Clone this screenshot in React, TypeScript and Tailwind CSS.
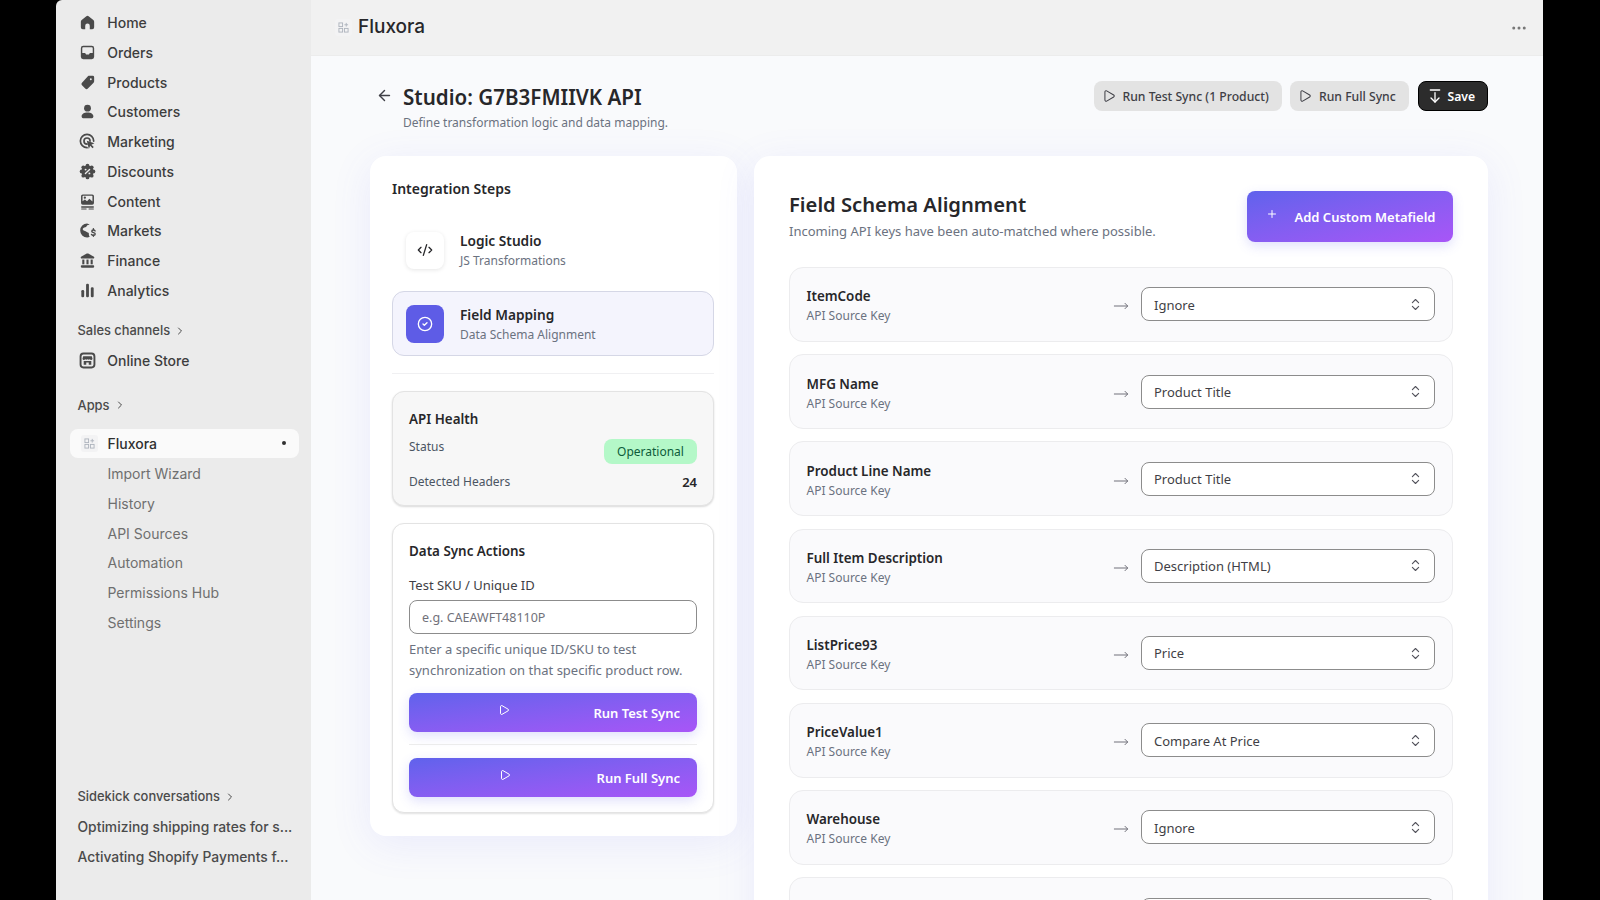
import React from 'react';
import { ArrowDownFromLine, ArrowLeft, ChevronRight, ChevronsUpDown, CircleCheck, CodeXml, Ellipsis, MoveRight, Play, Plus } from 'lucide-react';

const icons: Record<string, React.ReactNode> = {
  home: <path d="M8.8 3.4 3.9 7.3A2.4 2.4 0 0 0 3 9.2V15a2 2 0 0 0 2 2h2.6v-3.6a2.4 2.4 0 0 1 4.8 0V17H15a2 2 0 0 0 2-2V9.2a2.4 2.4 0 0 0-.9-1.9l-4.9-3.900a2 2 0 0 0-2.400 0z" />,
  orders: <path fillRule="evenodd" d="M5.500 3h9A2.500 2.500 0 0 1 17 5.500v9a2.500 2.500 0 0 1-2.500 2.500h-9A2.500 2.500 0 0 1 3 14.500v-9A2.500 2.500 0 0 1 5.500 3zm-1 2.500v5h3l1 1.600h3l1-1.600h3v-5a1 1 0 0 0-1-1h-9a1 1 0 0 0-1 1z" />,
  products: <path fillRule="evenodd" d="M11.200 3h4.300A1.500 1.500 0 0 1 17 4.500v4.300a2 2 0 0 1-.6 1.400l-6 6.200a2 2 0 0 1-2.800 0l-3.400-3.400a2 2 0 0 1 0-2.800l6-6.600a2 2 0 0 1 1-.6zm2.300 2.500a1 1 0 1 0 0 2 1 1 0 0 0 0-2z" />,
  customers: <><circle cx="10" cy="6.500" r="3.600" /><path d="M3.800 15.300c0-2.600 2.600-4.200 6.200-4.200s6.200 1.600 6.200 4.200c0 .9-.7 1.700-1.600 1.700H5.400c-.9 0-1.600-.8-1.600-1.700z" /></>,
  marketing: <><path fill="none" stroke="currentColor" strokeWidth="1.800" strokeLinecap="round" d="M9.500 16.500A7 7 0 1 1 16.500 9.500" /><path fill="none" stroke="currentColor" strokeWidth="1.800" strokeLinecap="round" d="M9.500 12.700A3.200 3.200 0 1 1 12.700 9.500" /><path d="m9.300 9.300 8 2.600-3.200 1.400 2.500 2.500-1.300 1.300-2.500-2.500-1.400 3.200z" /></>,
  discounts: <><circle cx="10" cy="10" r="6.300" /><circle cx="10" cy="3.800" r="2" /><circle cx="10" cy="16.200" r="2" /><circle cx="3.800" cy="10" r="2" /><circle cx="16.200" cy="10" r="2" /><circle cx="5.600" cy="5.600" r="2" /><circle cx="14.400" cy="5.600" r="2" /><circle cx="5.600" cy="14.400" r="2" /><circle cx="14.400" cy="14.400" r="2" /><path stroke="#ebebeb" strokeWidth="1.400" strokeLinecap="round" d="m7.800 12.200 4.400-4.400" /><circle cx="8" cy="8" r="1" fill="#ebebeb" /><circle cx="12" cy="12" r="1" fill="#ebebeb" /></>,
  content: <><path fillRule="evenodd" d="M5 2.500h10A1.800 1.800 0 0 1 16.800 4.300v7.400A1.800 1.800 0 0 1 15 13.500H5a1.800 1.800 0 0 1-1.800-1.800V4.300A1.800 1.800 0 0 1 5 2.500zm-.2 2v5.300l2.400-2 2.300 2 2.500-2.800 3.200 3V4.500a.6.600 0 0 0-.6-.6H5.400a.6.600 0 0 0-.6.600z" /><circle cx="7.200" cy="6" r="1.200" /><rect x="3.200" y="15" width="13.600" height="1.500" rx=".7" /><rect x="3.200" y="17.300" width="6" height="1.100" rx=".5" /><rect x="11" y="17.300" width="5.800" height="1.100" rx=".5" /></>,
  markets: <><path d="M9.600 2.700a7.300 7.300 0 0 0 0 14.600c1 0 2-.2 2.800-.6-1-1-1-2.800-1-3.700 0-1-2-1.200-3-2s-2.900-.6-3.400-2c-.4-1.200 1.300-2 2.800-2.400C9.400 6.200 9 5 9.800 4.600c1-.5 2.500-.4 3 .1a7.200 7.200 0 0 0-3.200-2z" /><path fill="none" stroke="currentColor" strokeWidth="1.500" strokeLinecap="round" d="M18 10.500c-.4-.8-1-1.100-1.800-1.100-1 0-1.700.6-1.700 1.400 0 1.900 3.600 1 3.600 2.900 0 .9-.8 1.500-1.900 1.500-.9 0-1.600-.4-2-1.100M16.200 8.200v1.200M16.200 14.700v1.300" /></>,
  finance: <><path d="M9.300 2.700 3.600 5.700A1.200 1.200 0 0 0 4.200 8h11.600a1.200 1.200 0 0 0 .6-2.300l-5.700-3a1.500 1.500 0 0 0-1.400 0z" /><rect x="4.500" y="9" width="2.200" height="5" /><rect x="8.900" y="9" width="2.200" height="5" /><rect x="13.300" y="9" width="2.200" height="5" /><rect x="3" y="15" width="14" height="2.500" rx=".8" /></>,
  analytics: <><rect x="3.500" y="9.500" width="3" height="7.500" rx="1.300" /><rect x="8.500" y="3" width="3" height="14" rx="1.300" /><rect x="13.500" y="6.500" width="3" height="10.500" rx="1.300" /></>,
  store: <><rect x="2.700" y="2.700" width="14.600" height="14.600" rx="3" fill="none" stroke="currentColor" strokeWidth="2" /><path d="M5.500 5.500h9l.8 2.700a1.500 1.500 0 0 1-2.800.6 2 2 0 0 1-2.500 0 2 2 0 0 1-2.500 0 1.500 1.500 0 0 1-2.800-.6z" /><path fillRule="evenodd" d="M6 10.500h8v4h-2.700v-2.500H8.700v2.500H6z" /></>,
};

const topNav = [
  ['home', 'Home'],
  ['orders', 'Orders'],
  ['products', 'Products'],
  ['customers', 'Customers'],
  ['marketing', 'Marketing'],
  ['discounts', 'Discounts'],
  ['content', 'Content'],
  ['markets', 'Markets'],
  ['finance', 'Finance'],
  ['analytics', 'Analytics'],
];

const subNav = ['Import Wizard', 'History', 'API Sources', 'Automation', 'Permissions Hub', 'Settings'];

const mappings = [
  ['ItemCode', 'Ignore'],
  ['MFG Name', 'Product Title'],
  ['Product Line Name', 'Product Title'],
  ['Full Item Description', 'Description (HTML)'],
  ['ListPrice93', 'Price'],
  ['PriceValue1', 'Compare At Price'],
  ['Warehouse', 'Ignore'],
  ['', ''],
];

const NavRow = ({ icon, label, className = '' }: { icon: string; label: string; className?: string }) => (
  <div className={`flex h-[29.75px] items-center gap-[10px] pl-[22.3px] text-[14px] font-medium text-[#3d3d3d] ${className}`}>
    <svg viewBox="0 0 20 20" fill="currentColor" className="h-[19px] w-[19px] shrink-0 text-[#4a4a4a]">
      {icons[icon]}
    </svg>
    {label}
  </div>
);

const AppGlyph = () => (
  <span className="flex h-[17px] w-[17px] shrink-0 items-center justify-center rounded-[3px] bg-[#f3f3f4]">
    <svg viewBox="0 0 12 12" className="h-[11px] w-[11px]" fill="none" stroke="#aeb4bd" strokeWidth="1">
      <rect x="1" y="1" width="4" height="4" />
      <rect x="1" y="7" width="4" height="4" />
      <rect x="7" y="7" width="4" height="4" />
      <path d="M9 1v4M7 3h4" />
    </svg>
  </span>
);

const SectionLabel = ({ label, className }: { label: string; className: string }) => (
  <div className={`flex h-6 items-center gap-[4px] pl-[21.5px] text-[12.9px] font-medium text-[#4a4a4a] ${className}`}>
    {label}
    <ChevronRight className="h-3 w-3" strokeWidth={2} />
  </div>
);

const Sidebar = () => (
  <aside className="flex w-[255px] shrink-0 flex-col rounded-tl-md bg-[#ebebeb] pb-[28px] pt-[7.7px] font-['Inter',sans-serif]">
    {topNav.map(([icon, label]) => (
      <NavRow key={label} icon={icon} label={label} />
    ))}
    <SectionLabel label="Sales channels" className="mt-[13.5px]" />
    <NavRow icon="store" label="Online Store" className="mt-[3.4px]" />
    <SectionLabel label="Apps" className="mt-[17.5px]" />
    <div className="ml-[13.5px] mr-[12.5px] mt-[11.5px] flex h-[29px] items-center rounded-lg bg-[#fafafa] pl-[11.5px] pr-[13px] text-[14px] font-medium text-[#303030]">
      <AppGlyph />
      <span className="ml-[9.5px]">Fluxora</span>
      <span className="ml-auto h-1 w-1 rounded-full bg-[#303030]" />
    </div>
    <div className="mt-[1px]">
      {subNav.map((label) => (
        <div key={label} className="flex h-[29.75px] items-center pl-[51.5px] text-[14px] text-[#6f6f6f]">
          {label}
        </div>
      ))}
    </div>
    <div className="mt-auto">
      <SectionLabel label="Sidekick conversations" className="" />
      <div className="mt-[3.7px] flex h-[29.75px] items-center whitespace-nowrap pl-[21.5px] text-[13.85px] font-medium text-[#4a4a4a]">
        Optimizing shipping rates for s...
      </div>
      <div className="flex h-[29.75px] items-center whitespace-nowrap pl-[21.5px] text-[13.85px] font-medium text-[#4a4a4a]">
        Activating Shopify Payments f...
      </div>
    </div>
  </aside>
);

const GradientButton = ({ label, iconGap, className }: { label: string; iconGap: string; className: string }) => (
  <button className={`flex h-[38.5px] w-full items-center rounded-lg bg-gradient-to-br from-[#5f62ec] to-[#a855f7] pr-[17px] text-[13px] font-semibold text-white shadow-[0_4px_12px_rgba(99,102,241,0.2)] ${className}`}>
    <Play className={`mb-[4px] h-3 w-3 ${iconGap}`} strokeWidth={2} />
    <span className="ml-auto mt-[3px]">{label}</span>
  </button>
);

const StepsCard = () => (
  <div className="w-[367px] shrink-0 self-start rounded-2xl bg-white pb-[23px] pl-[22px] pr-[23px] pt-[23px] shadow-[0_8px_40px_rgba(99,102,241,0.1)]">
    <h2 className="text-[14px] font-semibold leading-5 text-[#27272a]">Integration Steps</h2>
    <div className="mt-[31px] flex items-center gap-[16px] px-[14px]">
      <div className="flex h-[37px] w-[38px] items-center justify-center rounded-lg bg-white shadow-[0_1px_4px_rgba(0,0,0,0.1)]">
        <CodeXml className="h-4 w-4 text-[#27272a]" strokeWidth={2} />
      </div>
      <div className="mt-[1px]">
        <div className="text-[13.7px] font-semibold leading-5 text-[#27272a]">Logic Studio</div>
        <div className="mt-[1px] text-[12px] leading-[18px] text-[#6b7280]">JS Transformations</div>
      </div>
    </div>
    <div className="mt-[21px] flex h-[65px] items-center gap-[16px] rounded-xl border border-[#d5d7e6] bg-[#f4f4fd] px-[13px]">
      <div className="flex h-[38px] w-[38px] items-center justify-center rounded-lg bg-[#5e5ce6]">
        <CircleCheck className="h-4 w-4 text-white" strokeWidth={2} />
      </div>
      <div className="mt-[1px]">
        <div className="text-[13.7px] font-semibold leading-5 text-[#27272a]">Field Mapping</div>
        <div className="mt-[1px] text-[12px] leading-[18px] text-[#6b7280]">Data Schema Alignment</div>
      </div>
    </div>
    <div className="mt-[17px] h-px bg-[#f0f0f2]" />
    <div className="mt-[17px] h-[115px] rounded-xl border border-[#e3e3e3] bg-[#f7f7f7] px-[16px] pt-[17px] shadow-[0_1px_2px_rgba(0,0,0,0.15)]">
      <div className="text-[13.4px] font-semibold leading-5 text-[#27272a]">API Health</div>
      <div className="mt-[10px] flex items-start justify-between">
        <span className="mt-[-1px] text-[12px] leading-[18px] text-[#4b5563]">Status</span>
        <span className="flex h-[25px] w-[93px] items-center justify-center rounded-lg bg-[#b4f8c8] text-[12px] text-[#0d5c3a]">Operational</span>
      </div>
      <div className="mt-[9px] flex items-center justify-between text-[12px] leading-[18px] text-[#4b5563]">
        <span>Detected Headers</span>
        <span className="text-[13px] font-semibold text-[#27272a]">24</span>
      </div>
    </div>
    <div className="mt-[17px] h-[290px] rounded-xl border border-[#e3e3e3] bg-white px-[16px] pt-[17px] shadow-[0_1px_2px_rgba(0,0,0,0.12)]">
      <div className="text-[13.4px] font-semibold leading-5 text-[#27272a]">Data Sync Actions</div>
      <label className="mt-[14px] block text-[13px] leading-5 text-[#3f3f46]">Test SKU / Unique ID</label>
      <input
        placeholder="e.g. CAEAWFT48110P"
        className="mt-[5px] h-[34px] w-full rounded-lg border border-[#8c8c8c] bg-white px-[12px] pt-[1px] text-[12.5px] outline-none placeholder:text-[#71717a]"
      />
      <p className="mt-[5px] text-[13px] leading-[21px] text-[#6b7280]">
        Enter a specific unique ID/SKU to test synchronization on that specific product row.
      </p>
      <GradientButton label="Run Test Sync" iconGap="ml-[89px]" className="mt-[12px]" />
      <div className="mt-[12.5px] h-px bg-[#ececec]" />
      <GradientButton label="Run Full Sync" iconGap="ml-[90px]" className="mt-[13px]" />
    </div>
  </div>
);

const MappingRow = ({ name, target }: { name: string; target: string }) => (
  <div className="flex h-[74.7px] shrink-0 items-center rounded-[14px] border border-[#ececee] bg-[#fafafc] pl-[16.5px] pr-[17.5px]">
    {name && (
      <div className="mt-[3px]">
        <div className="text-[13.4px] font-semibold leading-5 text-[#27272a]">{name}</div>
        <div className="mt-[1px] text-[12px] leading-[18px] text-[#6b7280]">API Source Key</div>
      </div>
    )}
    <MoveRight className="ml-auto mr-[1px] mt-[4px] h-4 w-4 text-[#71717a]" strokeWidth={1.5} />
    <div className="ml-[11px] flex h-[34px] w-[294px] items-center justify-between rounded-lg border border-[#8c8c8c] bg-white pl-[12.5px] pr-[11px] text-[13px] text-[#3f3f46]">
      <span className="mt-[2px]">{target}</span>
      <ChevronsUpDown className="h-[15px] w-[15px] text-[#52525b]" strokeWidth={1.75} />
    </div>
  </div>
);

const SchemaCard = () => (
  <div className="h-[900px] flex-1 rounded-2xl bg-white px-[35px] pt-[35px] shadow-[0_8px_40px_rgba(99,102,241,0.1)]">
    <div className="flex h-[50.7px] items-start justify-between">
      <div>
        <h2 className="mt-[-1.5px] text-[20.2px] font-semibold leading-7 text-[#27272a]">Field Schema Alignment</h2>
        <p className="mt-[3.2px] text-[13px] leading-5 text-[#6b7280]">Incoming API keys have been auto-matched where possible.</p>
      </div>
      <button className="flex h-[50.7px] w-[206px] items-center rounded-lg bg-gradient-to-br from-[#5f62ec] to-[#a855f7] pl-[19px] pr-[17.5px] text-[13px] font-semibold text-white shadow-[0_4px_12px_rgba(99,102,241,0.2)]">
        <Plus className="mb-[5px] h-3 w-3" strokeWidth={2} />
        <span className="ml-auto mt-[3px]">Add Custom Metafield</span>
      </button>
    </div>
    <div className="mt-[25.3px] flex flex-col gap-[12.5px]">
      {mappings.map(([name, target], i) => (
        <MappingRow key={i} name={name} target={target} />
      ))}
    </div>
  </div>
);

const App: React.FC = () => (
  <div className="flex h-[900px] w-[1600px] overflow-hidden bg-black pl-[56px] pr-[57px] font-['Noto_Sans',sans-serif]">
    <Sidebar />
    <div className="flex min-w-0 flex-1 flex-col">
      <header className="flex h-14 shrink-0 items-center border-b border-[#ececec] bg-[#f1f1f1] pl-[24px] pr-[15px] font-['Inter',sans-serif]">
        <AppGlyph />
        <span className="ml-[6px] text-[19px] font-medium text-[#27272a]">Fluxora</span>
        <Ellipsis className="ml-auto h-[18px] w-[18px] text-[#777777]" strokeWidth={2} />
      </header>
      <main className="min-h-0 flex-1 overflow-hidden bg-[#f9fafc] pl-[59px] pr-[55px] pt-[25px]">
        <div className="flex h-[75px] items-start">
          <ArrowLeft className="ml-[6px] mt-[5.7px] h-[17px] w-[17px] text-[#3f3f46]" strokeWidth={2} />
          <div className="ml-[10px] mt-[1.7px]">
            <h1 className="text-[20.6px] font-semibold leading-7 text-[#27272a]">Studio: G7B3FMIIVK API</h1>
            <p className="mt-[2px] text-[12px] leading-5 text-[#6b7280]">Define transformation logic and data mapping.</p>
          </div>
          <div className="ml-auto flex gap-[8.5px]">
            <button className="flex h-[29.7px] w-[188px] items-center gap-[7px] whitespace-nowrap rounded-lg bg-[#e3e3e3] pl-[8px] text-[12.2px] font-medium text-[#3f3f46]">
              <Play className="h-[14px] w-[14px]" strokeWidth={1.75} />
              <span className="mt-[2px]">Run Test Sync (1 Product)</span>
            </button>
            <button className="flex h-[29.7px] w-[119px] items-center gap-[7px] whitespace-nowrap rounded-lg bg-[#e3e3e3] pl-[8px] text-[12.2px] font-medium text-[#3f3f46]">
              <Play className="h-[14px] w-[14px]" strokeWidth={1.75} />
              <span className="mt-[2px]">Run Full Sync</span>
            </button>
            <button className="flex h-[29.7px] w-[70.5px] items-center gap-[5px] rounded-lg border border-black bg-[#2c2c2c] pl-[8px] text-[12.2px] font-semibold text-white">
              <ArrowDownFromLine className="h-4 w-4" strokeWidth={2} />
              <span className="mt-[2px]">Save</span>
            </button>
          </div>
        </div>
        <div className="flex gap-[17px]">
          <StepsCard />
          <SchemaCard />
        </div>
      </main>
    </div>
  </div>
);

export default App;
